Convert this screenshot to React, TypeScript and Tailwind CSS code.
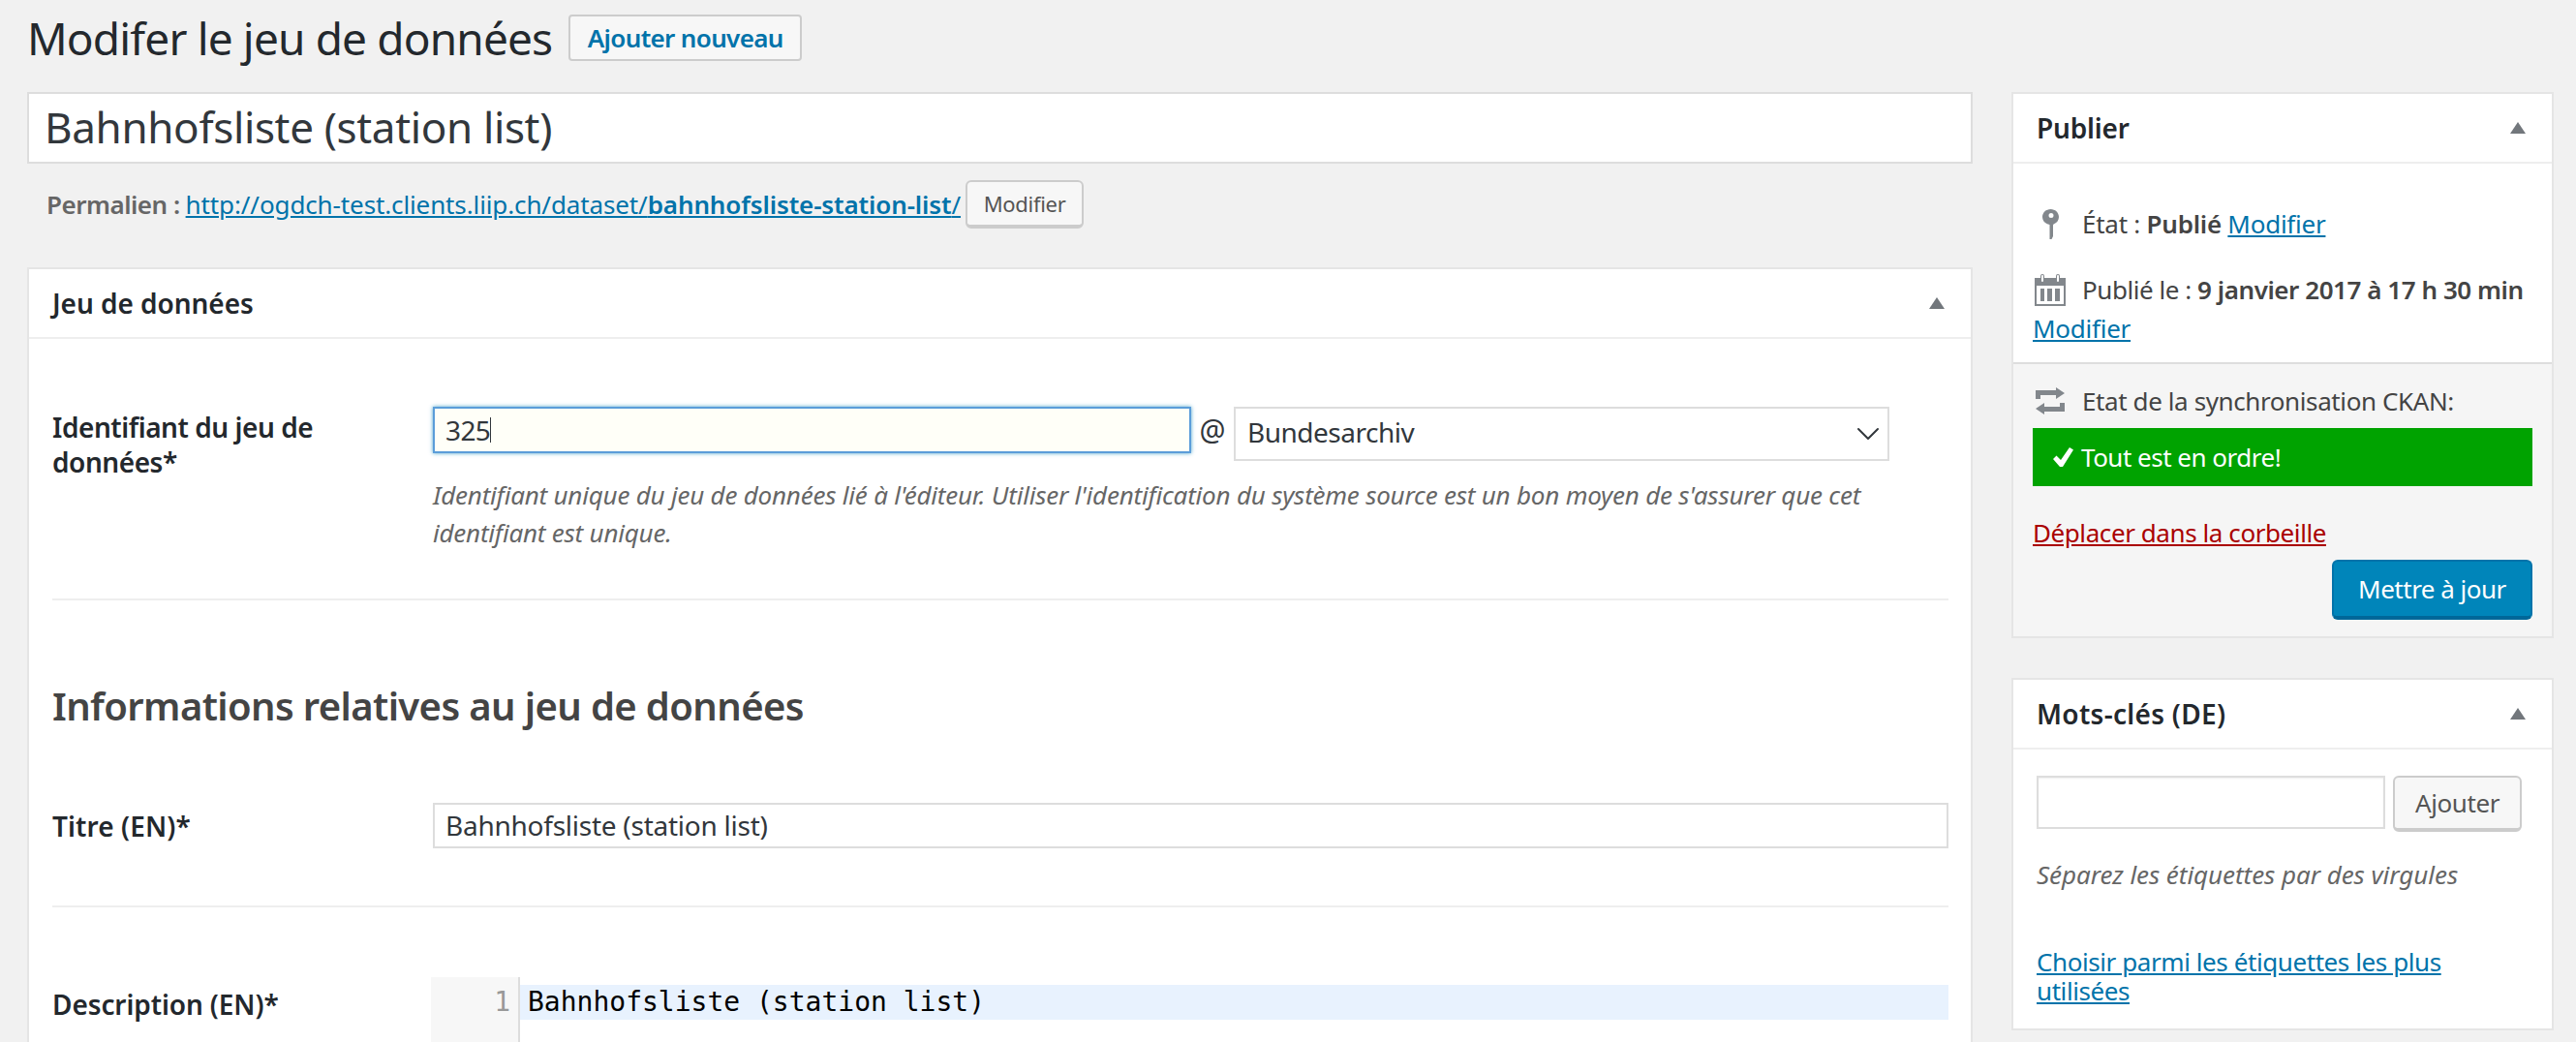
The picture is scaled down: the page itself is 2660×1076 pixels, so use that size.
import React from 'react';
import { ChevronDown } from 'lucide-react';

const Toggle = () => <div className="w-0 h-0 border-x-[8px] border-x-transparent border-b-[12px] border-b-[#72777c]" />;

const BoxHeader = ({ title, tracking }: { title: string; tracking: string }) => (
  <div className="h-[72px] border-b-2 border-[#eeeeee] pl-[24px] pr-[27px] flex items-center justify-between">
    <h2 className={`text-[28px] font-semibold text-[#23282d] ${tracking}`}>{title}</h2>
    <Toggle />
  </div>
);

const KeyIcon = () => (
  <svg viewBox="0 0 17 31" className="w-[17px] h-[31px] shrink-0 fill-[#82878c]">
    <path fillRule="evenodd" d="M8.5 0C13.2 0 17 3.6 17 8c0 3.300-2 6-5 7.300L11 16v12l-1.500 3H7.500V16l-2.500-.7C2 14 0 11.300 0 8 0 3.600 3.800 0 8.500 0zM9 4a2.500 2.500 0 1 0 0 5 2.500 2.500 0 0 0 0-5z" />
  </svg>
);

const CalendarIcon = () => (
  <svg viewBox="0 0 32 33" className="w-[32px] h-[33px] shrink-0 fill-[#82878c]">
    <path fillRule="evenodd" d="M0 4h6V2a2 2 0 0 1 4 0v2h12V2a2 2 0 0 1 4 0v2h6v29H0V4zm8-3a1 1 0 0 0-1 1v5a1 1 0 0 0 2 0V2a1 1 0 0 0-1-1zm16 0a1 1 0 0 0-1 1v5a1 1 0 0 0 2 0V2a1 1 0 0 0-1-1zM2 12v19h28V12H2zm4 3h4v13H6V15zm7 0h5v13h-5V15zm8 0h5v13h-5V15z" />
  </svg>
);

const SyncIcon = () => (
  <svg viewBox="0 0 32 28" className="w-[32px] h-[28px] shrink-0 fill-[#82878c]">
    <path d="M22 0l9 6-9 6V8H6v4H1V3h21V0zM10 28l-9-6 9-6v4h16v-4h5v9H10v3z" />
  </svg>
);

const CheckIcon = () => (
  <svg viewBox="0 0 21 20" className="w-[21px] h-[20px] fill-white">
    <path d="M17 0l4 2.500L10 20H7L0 12l3.500-3.500L8 13 17 0z" />
  </svg>
);

const App = () => {
  return (
    <div className="w-[2660px] h-[1076px] overflow-hidden bg-[#f1f1f1] pl-[28px] pr-[23px] pt-[15px] text-[26px] text-[#444444] font-['Noto_Sans',sans-serif]">
      <div className="flex items-center h-[48px]">
        <h1 className="text-[46px] font-normal text-[#23282d] tracking-[-0.85px] leading-[48px]">Modifer le jeu de données</h1>
        <a className="ml-[17px] w-[241px] h-[48px] flex items-center justify-center bg-[#f7f7f7] border-2 border-[#cccccc] rounded-[4px] text-[#0073aa] font-semibold text-[26px] tracking-[-0.65px]">Ajouter nouveau</a>
      </div>

      <div className="flex items-start gap-[40px] mt-[32px]">
        <main className="flex-1 min-w-0">
          <div className="h-[74px] bg-white border-2 border-[#dddddd] pl-[16px] pb-[2px] flex items-center text-[44px] text-[#32373c] tracking-[-0.35px]">Bahnhofsliste (station list)</div>

          <div className="flex items-center mt-[17px] pl-[20px] h-[50px]">
            <span className="font-semibold text-[#666666] tracking-[-0.5px]">Permalien :</span>
            <a className="ml-[6px] text-[#0073aa] underline tracking-[-0.12px]">http://ogdch-test.clients.liip.ch/dataset/<span className="font-semibold">bahnhofsliste-station-list</span>/</a>
            <button className="ml-[5px] w-[122px] h-[50px] bg-[#f7f7f7] border-2 border-[#cccccc] border-b-[4px] rounded-[6px] text-[22px] text-[#555555] tracking-[-0.3px]">Modifier</button>
          </div>

          <section className="mt-[40px] bg-white border-2 border-[#e5e5e5] h-[900px]">
            <BoxHeader title="Jeu de données" tracking="tracking-[-0.05px]" />
            <div className="pl-[24px] pr-[23px] pt-[70px]">
              <div className="grid grid-cols-[393px_1fr]">
                <label className="text-[28px] leading-[36px] font-semibold text-[#23282d] tracking-[-0.45px] pt-[3px] w-[340px]">Identifiant du jeu de données*</label>
                <div>
                  <div className="flex items-start">
                    <div className="w-[783px] h-[48px] bg-[#fffff8] border-2 border-[#5b9dd9] shadow-[0_0_4px_rgba(30,140,190,0.8)] flex items-center pl-[11px] text-[#32373c] text-[28px] tracking-[-0.6px]">
                      325<span className="w-[1px] h-[26px] bg-[#32373c]" />
                    </div>
                    <span className="w-[44px] text-center text-[#32373c] text-[30px] leading-[48px]">@</span>
                    <div className="w-[677px] h-[56px] bg-white border-2 border-[#dddddd] flex items-center justify-between pl-[12px] pb-[4px] text-[28px] text-[#32373c] tracking-[-0.5px]">
                      Bundesarchiv
                      <ChevronDown className="w-[40px] h-[40px] text-[#32373c] mt-[4px]" strokeWidth={1.2} />
                    </div>
                  </div>
                  <p className="mt-[16px] italic text-[26px] leading-[39px] text-[#666666] tracking-[-0.21px]">
                    Identifiant unique du jeu de données lié à l'éditeur. Utiliser l'identification du système source est un bon moyen de s'assurer que cet identifiant est unique.
                  </p>
                </div>
              </div>

              <div className="h-[2px] bg-[#eeeeee] mt-[48px]" />

              <h2 className="mt-[85px] text-[40px] leading-[48px] font-semibold text-[#444444] tracking-[-0.62px]">Informations relatives au jeu de données</h2>

              <div className="grid grid-cols-[393px_1fr] items-center mt-[76px]">
                <label className="text-[28px] font-semibold text-[#23282d] tracking-[0.1px]">Titre (EN)*</label>
                <div className="h-[47px] bg-white border-2 border-[#dddddd] flex items-center pl-[11px] pb-[1px] text-[28px] text-[#32373c] tracking-[-0.25px]">Bahnhofsliste (station list)</div>
              </div>

              <div className="h-[2px] bg-[#eeeeee] mt-[59px]" />

              <div className="grid grid-cols-[391px_1fr] mt-[72px]">
                <label className="text-[28px] font-semibold text-[#23282d] tracking-[-0.1px] pt-[7px]">Description (EN)*</label>
                <div className="flex h-[200px]">
                  <div className="w-[92px] bg-[#f7f7f7] border-r-2 border-[#dddddd] pt-[8px] pr-[8px] text-right font-['DejaVu_Sans_Mono',monospace] text-[28px] leading-[36px] text-[#999999]">1</div>
                  <div className="flex-1 pt-[8px]">
                    <div className="h-[36px] bg-[#e8f2fe] pl-[8px] font-['DejaVu_Sans_Mono',monospace] text-[28px] leading-[36px] text-black">Bahnhofsliste (station list)</div>
                  </div>
                </div>
              </div>
            </div>
          </section>
        </main>

        <aside className="w-[560px] shrink-0">
          <section className="bg-white border-2 border-[#e5e5e5]">
            <BoxHeader title="Publier" tracking="tracking-[-0.2px]" />
            <div className="pl-[20px] pr-[20px] pt-[42px] pb-[15px]">
              <div className="flex items-center h-[40px]">
                <span className="w-[51px] pl-[10px]"><KeyIcon /></span>
                <span className="tracking-[-0.25px]">État : <b className="font-semibold">Publié</b> <a className="text-[#0073aa] underline">Modifier</a></span>
              </div>
              <div className="flex items-center h-[40px] mt-[28px] whitespace-nowrap">
                <span className="w-[51px] pl-[2px]"><CalendarIcon /></span>
                <span className="tracking-[-0.45px]">Publié le : <b className="font-semibold">9 janvier 2017 à 17 h 30 min</b></span>
              </div>
              <div className="h-[40px] leading-[40px]"><a className="text-[#0073aa] underline tracking-[-0.25px]">Modifier</a></div>
            </div>
            <div className="bg-[#f5f5f5] border-t-2 border-[#dddddd] pl-[20px] pr-[20px] pt-[18px] pb-[17px]">
              <div className="flex items-center h-[40px]">
                <span className="w-[51px] pl-[2px]"><SyncIcon /></span>
                <span className="tracking-[-0.4px]">Etat de la synchronisation CKAN:</span>
              </div>
              <div className="mt-[8px] h-[60px] bg-[#00a300] text-white flex items-center pl-[21px] tracking-[-0.5px]">
                <span className="w-[29px]"><CheckIcon /></span>Tout est en ordre!
              </div>
              <a className="block mt-[28px] h-[40px] leading-[40px] text-[#aa0000] underline tracking-[-0.42px]">Déplacer dans la corbeille</a>
              <div className="flex justify-end mt-[8px]">
                <button className="w-[207px] h-[62px] bg-[#0085ba] border-2 border-[#0073aa] border-b-[4px] border-b-[#006799] rounded-[6px] text-white text-[26px] tracking-[-0.5px]">Mettre à jour</button>
              </div>
            </div>
          </section>

          <section className="mt-[41px] bg-white border-2 border-[#e5e5e5]">
            <BoxHeader title="Mots-clés (DE)" tracking="tracking-[0.3px]" />
            <div className="pl-[24px] pr-[31px] pt-[27px] pb-[24px]">
              <div className="flex items-start gap-[8px]">
                <div className="w-[360px] h-[55px] bg-white border-2 border-[#dddddd] shadow-[inset_0_1px_2px_rgba(0,0,0,0.07)]" />
                <button className="w-[133px] h-[58px] bg-[#f7f7f7] border-2 border-[#cccccc] border-b-[4px] rounded-[6px] text-[#555555] tracking-[-0.4px]">Ajouter</button>
              </div>
              <p className="mt-[24px] italic text-[#666666] leading-[40px] tracking-[-0.05px]">Séparez les étiquettes par des virgules</p>
              <a className="block mt-[55px] text-[#0073aa] underline leading-[30px] tracking-[-0.42px]">Choisir parmi les étiquettes les plus utilisées</a>
            </div>
          </section>
        </aside>
      </div>
    </div>
  );
};

export default App;
